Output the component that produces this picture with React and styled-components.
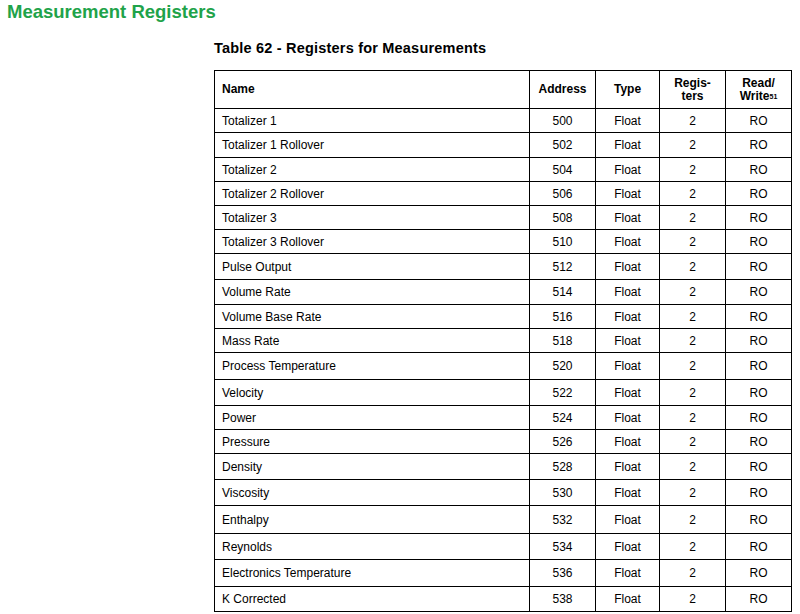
import React from 'react';
import styled, { createGlobalStyle } from 'styled-components';

const Global = createGlobalStyle`
  body { margin: 0; background: #fff; font-family: "Liberation Sans", Arial, sans-serif; color: #000; }
`;

const Page = styled.div`
  padding: 1px 0 0 7px;
`;

const Heading = styled.h1`
  margin: 0;
  font-size: 18.5px;
  font-weight: bold;
  color: #1fa34a;
`;

const Section = styled.div`
  margin-left: 207px;
  width: 577px;
`;

const Caption = styled.div`
  font-size: 14.5px;
  font-weight: bold;
  margin-top: 17px;
  margin-bottom: 14px;
  letter-spacing: 0.2px;
`;

const Table = styled.table`
  border-collapse: collapse;
  width: 577px;
  font-size: 12px;
  table-layout: fixed;
`;

const Th = styled.th`
  border: 1px solid #000;
  height: 37px;
  padding: 0 7px;
  text-align: ${(p) => (p.$left ? 'left' : 'center')};
  font-size: 12px;
  line-height: 13px;
`;

const Td = styled.td`
  border: 1px solid #000;
  padding: 0 7px;
  text-align: ${(p) => (p.$left ? 'left' : 'center')};
`;

const Sup = styled.span`
  font-size: 7px;
  vertical-align: 1px;
`;

const rows = [
  ['Totalizer 1', 500, 24], ['Totalizer 1 Rollover', 502, 25], ['Totalizer 2', 504, 24],
  ['Totalizer 2 Rollover', 506, 24], ['Totalizer 3', 508, 24], ['Totalizer 3 Rollover', 510, 24],
  ['Pulse Output', 512, 26], ['Volume Rate', 514, 25], ['Volume Base Rate', 516, 24],
  ['Mass Rate', 518, 24], ['Process Temperature', 520, 27], ['Velocity', 522, 26],
  ['Power', 524, 24], ['Pressure', 526, 24], ['Density', 528, 26], ['Viscosity', 530, 26],
  ['Enthalpy', 532, 28], ['Reynolds', 534, 26], ['Electronics Temperature', 536, 27],
  ['K Corrected', 538, 25],
];

export default function App() {
  return (
    <>
      <Global />
      <Page>
        <Heading>Measurement Registers</Heading>
        <Section>
          <Caption>Table 62 - Registers for Measurements</Caption>
          <Table>
            <colgroup>
              <col style={{ width: 315 }} />
              <col style={{ width: 66 }} />
              <col style={{ width: 64 }} />
              <col style={{ width: 66 }} />
              <col style={{ width: 66 }} />
            </colgroup>
            <thead>
              <tr>
                <Th $left>Name</Th>
                <Th>Address</Th>
                <Th>Type</Th>
                <Th>Regis-<br />ters</Th>
                <Th>Read/<br />Write<Sup>51</Sup></Th>
              </tr>
            </thead>
            <tbody>
              {rows.map(([name, addr, h]) => (
                <tr key={addr} style={{ height: h }}>
                  <Td $left>{name}</Td>
                  <Td>{addr}</Td>
                  <Td>Float</Td>
                  <Td>2</Td>
                  <Td>RO</Td>
                </tr>
              ))}
            </tbody>
          </Table>
        </Section>
      </Page>
    </>
  );
}
